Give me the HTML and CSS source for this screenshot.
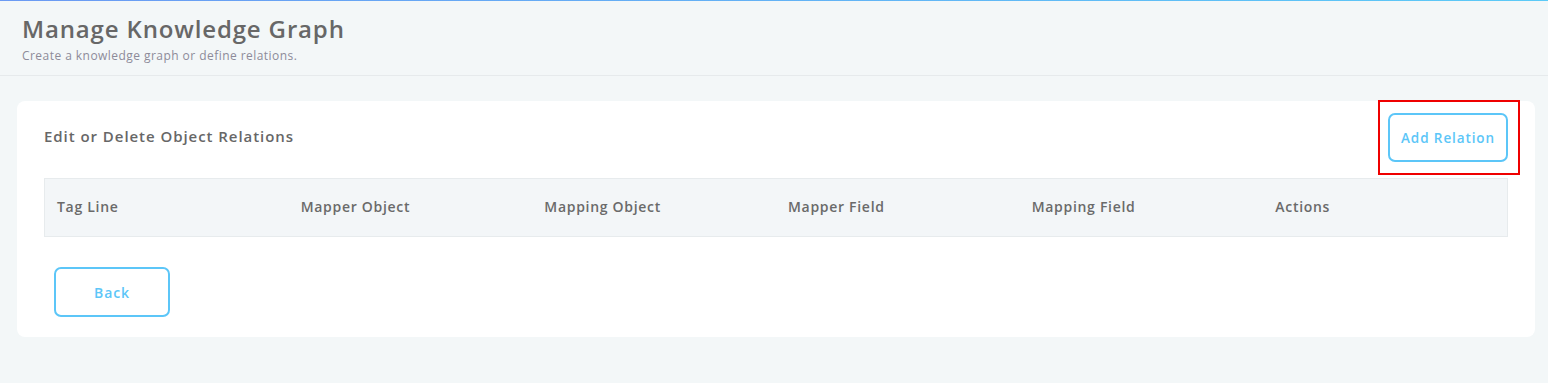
FILE: index.html
```html
<!DOCTYPE html>
<html>
<head>
<meta charset="utf-8">
<link rel="stylesheet" href="styles.css">
</head>
<body>
<div class="topline"></div>
<header class="page-header">
  <h1 class="page-title">Manage Knowledge Graph</h1>
  <p class="page-subtitle">Create a knowledge graph or define relations.</p>
</header>
<main class="content">
  <section class="card">
    <div class="card-head">
      <h2 class="card-title">Edit or Delete Object Relations</h2>
      <div class="add-wrap">
        <button class="btn btn-add">Add Relation</button>
        <span class="highlight"></span>
      </div>
    </div>
    <div class="table">
      <div class="th">Tag Line</div>
      <div class="th">Mapper Object</div>
      <div class="th">Mapping Object</div>
      <div class="th">Mapper Field</div>
      <div class="th">Mapping Field</div>
      <div class="th">Actions</div>
    </div>
    <div class="card-foot">
      <button class="btn btn-back">Back</button>
    </div>
  </section>
</main>
</body>
</html>
```
FILE: styles.css
```css
html, body {
  margin: 0;
  padding: 0;
}
body {
  background: #f3f7f8;
  font-family: "Open Sans", "Noto Sans", sans-serif;
  width: 1548px;
  height: 383px;
  overflow: hidden;
}
.topline {
  height: 1px;
  background: linear-gradient(90deg, #6b9af3, #5bcaf7);
}
.page-header {
  padding: 12px 22px 0;
  height: 62px;
  border-bottom: 1px solid #e6eaec;
}
.page-title {
  margin: 0;
  font-size: 24px;
  font-weight: 600;
  color: #676767;
  line-height: 32px;
  letter-spacing: 0.85px;
}
.page-subtitle {
  margin: 3px 0 0;
  font-size: 12px;
  color: #8d8b99;
  line-height: 16px;
  letter-spacing: 0.45px;
}
.content {
  padding: 25px 13px 0 17px;
}
.card {
  background: #fff;
  border-radius: 8px;
  padding: 12px 27px 20px 27px;
}
.card-head {
  display: flex;
  justify-content: space-between;
  align-items: center;
  height: 65px;
}
.card-title {
  margin: 0 0 19px;
  font-size: 15px;
  font-weight: 600;
  color: #676767;
  letter-spacing: 0.95px;
}
.add-wrap {
  position: relative;
  align-self: flex-start;
}
.btn {
  font-family: inherit;
  font-weight: 600;
  font-size: 13px;
  color: #5cc6f8;
  background: #fff;
  border: 2px solid #5cc6f8;
  border-radius: 7px;
  cursor: pointer;
}
.btn-add {
  width: 120px;
  height: 49px;
  font-size: 13.5px;
  letter-spacing: 0.9px;
}
.highlight {
  position: absolute;
  left: -10px;
  top: -13px;
  width: 138px;
  height: 71px;
  border: 2px solid #ef0000;
  pointer-events: none;
}
.table {
  display: grid;
  grid-template-columns: repeat(6, 1fr);
  background: #f3f6f8;
  border: 1px solid #e7ebed;
  height: 57px;
  align-items: center;
}
.th {
  padding-left: 12px;
  font-size: 14px;
  font-weight: 600;
  color: #6a6a6a;
  letter-spacing: 0.7px;
  margin-top: -2px;
}
.card-foot {
  padding: 30px 0 0 10px;
}
.btn-back {
  width: 116px;
  height: 50px;
  font-size: 14px;
  letter-spacing: 0.9px;
}
```
